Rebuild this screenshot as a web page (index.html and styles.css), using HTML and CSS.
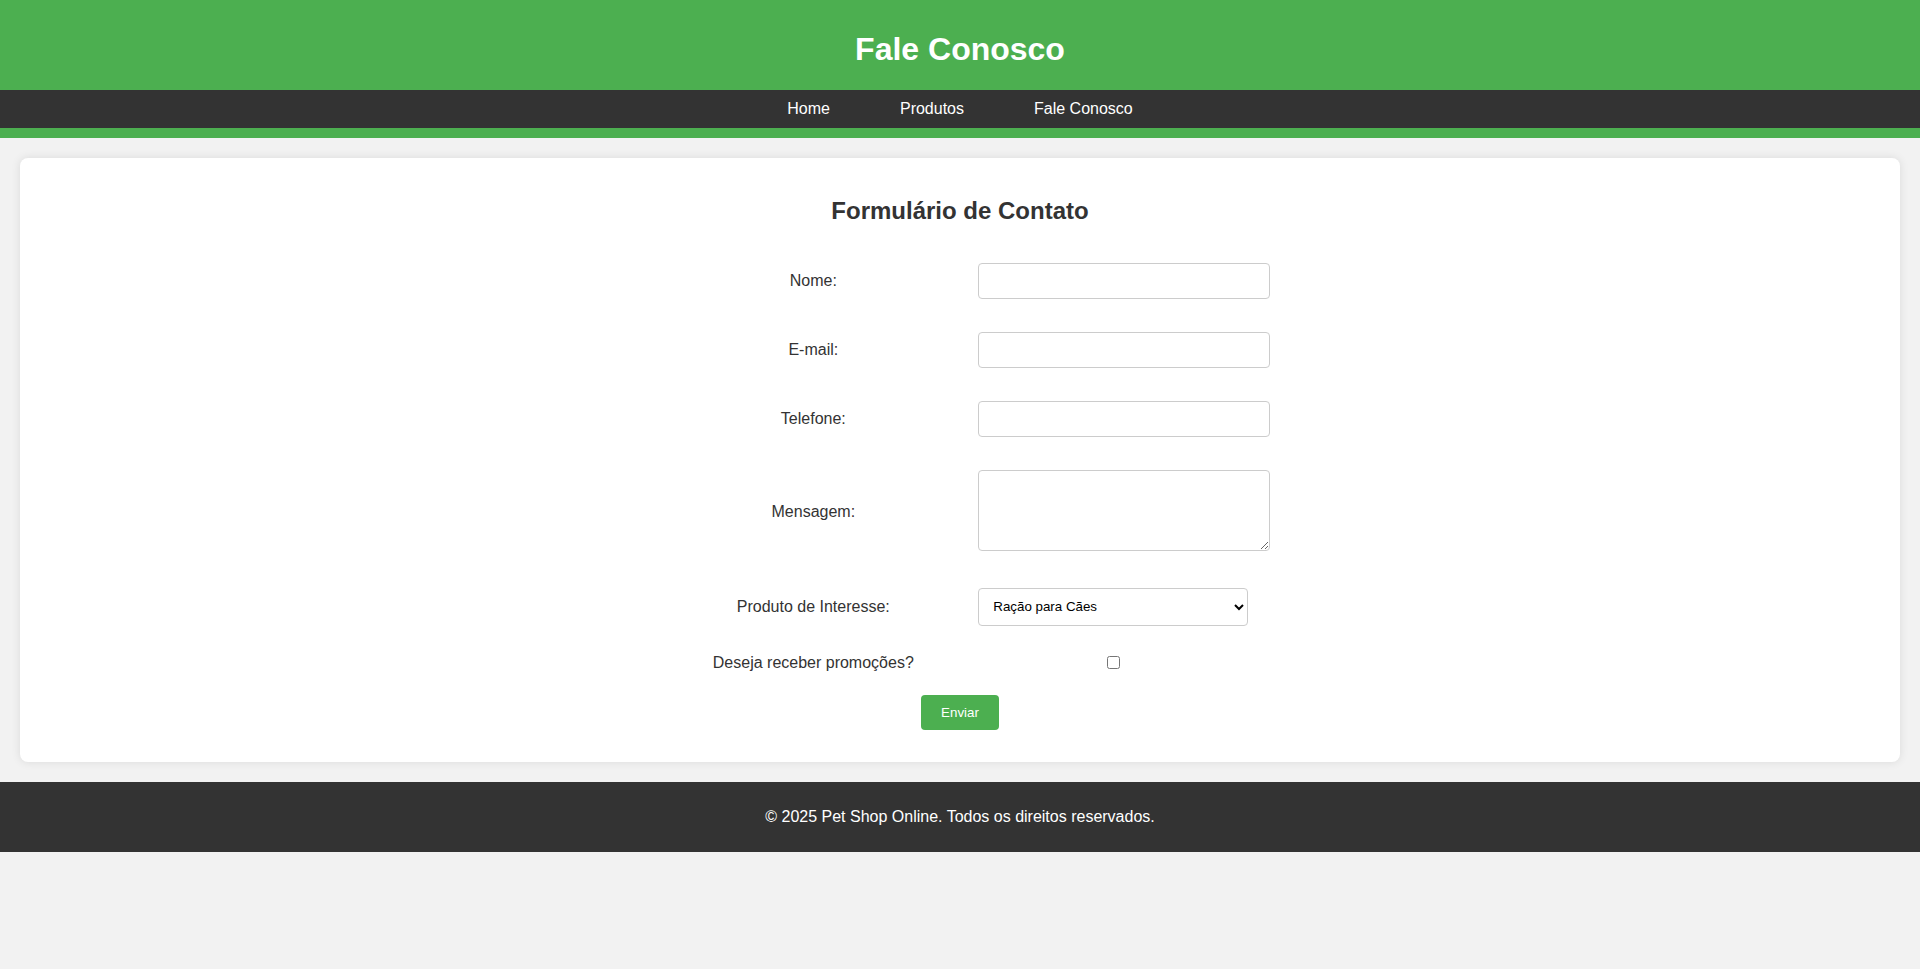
FILE: index.html
```html
<!DOCTYPE html>
<html lang="pt-BR">
<head>
<meta charset="UTF-8">
<title>Fale Conosco - Pet Shop Online</title>
<link rel="stylesheet" href="styles.css">
</head>
<body>
<header class="site-header">
  <h1 class="site-title">Fale Conosco</h1>
  <nav class="site-nav">
    <a href="#" class="nav-link">Home</a>
    <a href="#" class="nav-link">Produtos</a>
    <a href="#" class="nav-link">Fale Conosco</a>
  </nav>
</header>
<main class="main">
  <section class="card">
    <h2 class="card-title">Formulário de Contato</h2>
    <form class="form">
      <div class="field">
        <label class="field-label" for="nome">Nome:</label>
        <input class="input" type="text" id="nome">
      </div>
      <div class="field">
        <label class="field-label" for="email">E-mail:</label>
        <input class="input" type="email" id="email">
      </div>
      <div class="field">
        <label class="field-label" for="tel">Telefone:</label>
        <input class="input" type="tel" id="tel">
      </div>
      <div class="field">
        <label class="field-label" for="msg">Mensagem:</label>
        <textarea class="input textarea" id="msg"></textarea>
      </div>
      <div class="field field-select">
        <label class="field-label" for="produto">Produto de Interesse:</label>
        <select class="select" id="produto">
          <option>Ração para Cães</option>
          <option>Ração para Gatos</option>
          <option>Acessórios</option>
        </select>
      </div>
      <div class="field field-check">
        <label class="field-label" for="promo">Deseja receber promoções?</label>
        <input class="checkbox" type="checkbox" id="promo">
      </div>
      <div class="actions">
        <button type="button" class="btn">Enviar</button>
      </div>
    </form>
  </section>
</main>
<footer class="site-footer">
  <p class="footer-text">© 2025 Pet Shop Online. Todos os direitos reservados.</p>
</footer>
</body>
</html>
```
FILE: styles.css
```css
body {
  margin: 0;
  font-family: "Liberation Sans", Arial, sans-serif;
  background-color: #f2f2f2;
  color: #333;
}

.site-header {
  background-color: #4caf50;
  color: #fff;
  text-align: center;
  padding: 10px 0;
}

.site-title {
  margin: 21.44px 0;
  font-size: 32px;
  font-weight: bold;
}

.site-nav {
  background-color: #333;
  padding: 10px 0;
  display: flex;
  justify-content: center;
  gap: 70px;
}

.nav-link {
  color: #fff;
  text-decoration: none;
  font-size: 16px;
}

.main {
  padding: 20px;
}

.card {
  background: #fff;
  border-radius: 8px;
  box-shadow: 0 0 10px rgba(0, 0, 0, 0.1);
  padding: 20px 20px 32px;
}

.card-title {
  text-align: center;
  font-size: 24px;
  margin: 19px 0 19.92px;
  color: #333;
}

.form {
  padding-top: 18px;
}

.field {
  display: grid;
  grid-template-columns: 270px 270px;
  column-gap: 30px;
  justify-content: center;
  align-items: center;
  padding-left: 6.6px;
  margin-bottom: 33px;
}

.field-select {
  margin-bottom: 28px;
}

.field-check {
  margin-bottom: 23px;
}

.field-label {
  text-align: center;
  font-size: 16px;
  color: #333;
}

.input {
  width: 100%;
  height: 14px;
  padding: 10px;
  border: 1px solid #ccc;
  border-radius: 4px;
  font-family: "Liberation Sans", Arial, sans-serif;
  font-size: 13.333px;
  background: #fff;
}

.textarea {
  height: 59px;
  margin-bottom: 4px;
  resize: vertical;
}

.select {
  width: 100%;
  height: 38px;
  box-sizing: border-box;
  padding: 0 6px 0 10px;
  border: 1px solid #ccc;
  border-radius: 4px;
  font-family: "Liberation Sans", Arial, sans-serif;
  font-size: 13.333px;
  color: #000;
  background: #fff;
}

.checkbox {
  justify-self: center;
  margin: 0;
  width: 13px;
  height: 13px;
}

.actions {
  text-align: center;
}

.btn {
  background-color: #4caf50;
  color: #fff;
  border: none;
  border-radius: 4px;
  padding: 10px 20px;
  font-family: "Liberation Sans", Arial, sans-serif;
  font-size: 13.333px;
  line-height: 15px;
  cursor: pointer;
}

.site-footer {
  background-color: #333;
  color: #fff;
  text-align: center;
  padding: 10px 0;
}

.footer-text {
  margin: 16px 0;
  font-size: 16px;
}
```
